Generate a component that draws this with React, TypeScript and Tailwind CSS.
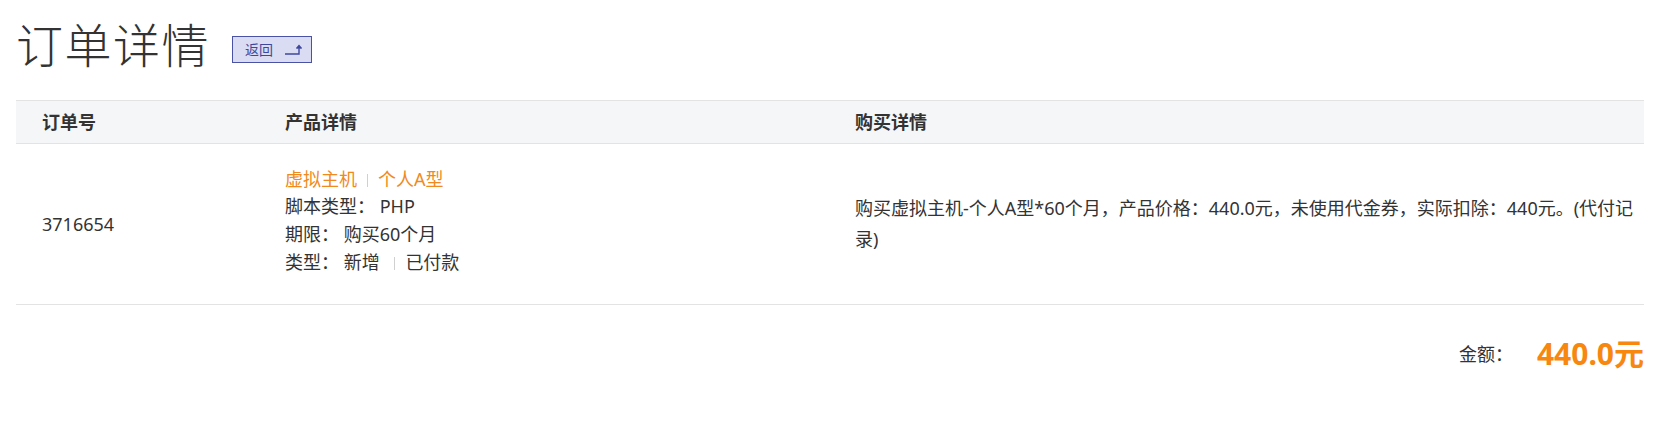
import React from 'react';

const font = { fontFamily: '"Noto Sans", "Noto Sans CJK SC", sans-serif' };

const Sep: React.FC = () => (
  <span className="inline-block w-px h-[13px] bg-[#d0d0d0] mx-[10px] align-[-1px]" />
);

const ReturnIcon: React.FC = () => (
  <svg width="19" height="11" viewBox="0 0 19 11" fill="none" stroke="#3f479c" strokeWidth="1.4">
    <path d="M1 10H15V2.5" />
    <path d="M12.5 4.5L15 1.5L17.5 4.5" fill="#3f479c" />
  </svg>
);

const App: React.FC = () => {
  return (
    <div className="w-[1669px] h-[432px] bg-white text-[#333] pl-[16px] pr-[25px]" style={font}>
      {/* 标题 */}
      <div className="h-[100px] flex items-center">
        <h1 className="text-[47px] font-light leading-none tracking-[1.5px] text-[#333] mt-[-10px]">订单详情</h1>
        <button className="ml-[22px] mt-[-1px] h-[27px] w-[80px] flex items-center pl-[12px] gap-[11px] bg-[#d9dcf3] border border-[#4a52a6] text-[#3f479c] text-[14px] leading-none">
          返回
          <ReturnIcon />
        </button>
      </div>

      {/* 订单表格 */}
      <table className="w-full border-collapse text-[18px]">
        <colgroup>
          <col className="w-[243px]" />
          <col className="w-[570px]" />
          <col />
        </colgroup>
        <thead>
          <tr className="bg-[#f5f6f7] border-t border-b border-[#e3e3e3] h-[43px]">
            <th className="text-left font-bold pl-[26px]">订单号</th>
            <th className="text-left font-bold pl-[26px]">产品详情</th>
            <th className="text-left font-bold pl-[26px]">购买详情</th>
          </tr>
        </thead>
        <tbody>
          <tr className="border-b border-[#e3e3e3] h-[161px]">
            <td className="pl-[26px] align-middle">3716654</td>
            <td className="pl-[26px] align-middle leading-[27.7px] pb-[6px]">
              <div className="text-[#f08a1c]">
                虚拟主机<Sep />个人A型
              </div>
              <div>脚本类型：&nbsp;PHP</div>
              <div>期限：&nbsp;购买60个月</div>
              <div>
                类型：&nbsp;新增&nbsp;<Sep />已付款
              </div>
            </td>
            <td className="pl-[26px] pr-[4px] align-middle leading-[31px]">
              购买虚拟主机-个人A型*60个月，产品价格：440.0元，未使用代金券，实际扣除：440元。(代付记录)
            </td>
          </tr>
        </tbody>
      </table>

      {/* 金额 */}
      <div className="flex justify-end items-center mt-[34px]">
        <span className="text-[18px] text-[#333]">金额：</span>
        <span className="ml-[24px] text-[30px] font-bold text-[#f7870f] leading-none">440.0元</span>
      </div>
    </div>
  );
};

export default App;
